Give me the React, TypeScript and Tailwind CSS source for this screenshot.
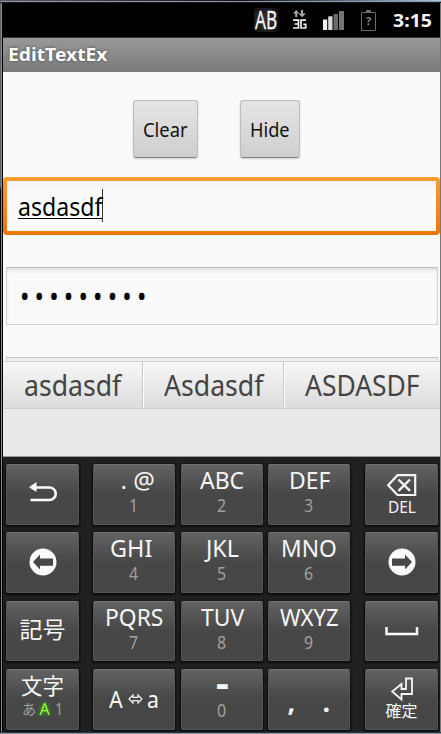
import { useLayoutEffect, useRef, useState, type ReactNode } from "react";

// A line of text condensed or widened to take up a given width.
function Fit({ w, className = "", children }: { w: number; className?: string; children: ReactNode }) {
  const ref = useRef<HTMLSpanElement>(null);
  const [scale, setScale] = useState(1);
  useLayoutEffect(() => {
    if (ref.current) setScale(w / ref.current.offsetWidth);
  }, [w]);
  return (
    <span className={`block shrink-0 whitespace-pre ${className}`} style={{ width: w }}>
      <span ref={ref} className="inline-block origin-left" style={{ transform: `scaleX(${scale})` }}>
        {children}
      </span>
    </span>
  );
}

function Key({ wide = false, className = "", children }: { wide?: boolean; className?: string; children: ReactNode }) {
  return (
    <div
      className={`flex h-[60.5px] flex-col items-center rounded-[2px] border border-[#565656] border-t-[#747474] bg-linear-to-b from-[#626262] via-[#474747] to-[#464646] text-[#f6f6f6] shadow-[0_1px_2px_1px_#0c0c0c] ${
        wide ? "w-[82px]" : "w-[73px]"
      } ${className}`}
    >
      {children}
    </div>
  );
}

function LetterKey({ label, w, digit, nudge = "" }: { label: string; w: number; digit: string; nudge?: string }) {
  return (
    <Key wide>
      <Fit w={w} className={`h-[32px] text-[24px] leading-[30px] ${nudge}`}>
        {label}
      </Fit>
      <Fit w={9.5} className="h-4 text-[18.5px] leading-4 text-[#a0a0a0]">
        {digit}
      </Fit>
    </Key>
  );
}

function Arrow({ flip = false }: { flip?: boolean }) {
  return (
    <svg width="28" height="28" viewBox="0 0 28 28" className={`-mt-px ${flip ? "-scale-x-100" : ""}`}>
      <circle cx="14" cy="14" r="13.5" fill="#fafafa" />
      <path d="M4 14 11 6.5V10.5H24V17.7H11V21.5Z" fill="#484848" />
    </svg>
  );
}

function StatusBar() {
  return (
    <header className="flex h-[34px] items-center bg-black pl-[251px] text-[#f4f4f4]">
      <div className="flex h-[24px] w-[24px] items-center justify-center rounded-[3px] bg-[radial-gradient(#333,#111)]">
        <Fit w={22} className="-mt-[2px] text-[25px] leading-[24px] [-webkit-text-stroke:0.3px_#f4f4f4]">
          AB
        </Fit>
      </div>
      <svg width="16" height="22" viewBox="0 0 16 22" className="ml-[14px]">
        <path d="M4.2 1 7.2 4.6H5.2V8H3.2V4.6H1Z M9 1H11V4.6H14L10 8.3 6.5 4.6H9Z" fill="#a8a8a8" />
        <path d="M1 11.2H6.5V19H1M2.5 15H6.5M14 11.2H9V19H13.7V15.4H11.3" fill="none" stroke="#eee" strokeWidth="1.7" />
      </svg>
      <svg width="24" height="22" viewBox="0 0 24 22" className="ml-[14px]">
        <path d="M1 10.5H5.2V21H1Z" fill="#f2f2f2" />
        <path d="M6.2 7.3H10.5V21H6.2Z" fill="#d8d8d8" />
        <path d="M11.5 5H16V21H11.5Z" fill="#696969" />
        <path d="M17 2H22V21H17Z" fill="#747474" />
      </svg>
      <div className="ml-[15px] flex w-[15px] flex-col items-center">
        <span className="h-[2px] w-[5px] bg-[#6c6c6c]" />
        <span className="flex h-[19px] w-[15px] items-center justify-center rounded-[1px] border-[1.5px] border-[#6c6c6c] text-[11px] font-bold text-[#858585]">
          ?
        </span>
      </div>
      <Fit w={39} className="ml-[17px] text-[18.5px] leading-[32px] font-bold">
        3:15
      </Fit>
    </header>
  );
}

function Keyboard() {
  return (
    <section className="grid h-[275px] grid-cols-[87px_88px_87px_97px_73px] content-start gap-y-[7.9px] bg-[#202020] pt-[7px] pl-[3px]">
      <Key className="justify-center">
        <svg width="30" height="22" viewBox="0 0 30 22" className="-mt-[5px]">
          <path d="M8 6.5H21.5A6 6 0 0 1 21.5 19H2.5" fill="none" stroke="#fafafa" strokeWidth="2.6" />
          <path d="M1 6.2 8.5 1V11Z" fill="#fafafa" />
        </svg>
      </Key>
      <LetterKey label=". @" w={34} digit="1" nudge="ml-[7px]" />
      <LetterKey label="ABC" w={44} digit="2" />
      <LetterKey label="DEF" w={41} digit="3" />
      <Key>
        <svg width="31" height="24" viewBox="0 0 31 24" className="mt-[8px]">
          <path d="M2.2 12.2 11.5 2.2H29.2V22H11.5Z" fill="none" stroke="#f6f6f6" strokeWidth="2.2" />
          <path d="M12.5 6.5 24 17.8M24 6.5 12.5 17.8" stroke="#f6f6f6" strokeWidth="2.4" />
        </svg>
        <Fit w={28} className="mt-[1px] text-[16.5px] leading-[18px]">
          DEL
        </Fit>
      </Key>

      <Key className="justify-center">
        <Arrow />
      </Key>
      <LetterKey label="GHI" w={42} digit="4" nudge="mr-[6px]" />
      <LetterKey label="JKL" w={33} digit="5" />
      <LetterKey label="MNO" w={56} digit="6" />
      <Key className="justify-center">
        <Arrow flip />
      </Key>

      <Key className="justify-center">
        <Fit w={46} className="mt-[-4px] text-[23px] leading-[30px]">
          記号
        </Fit>
      </Key>
      <LetterKey label="PQRS" w={58} digit="7" />
      <LetterKey label="TUV" w={43} digit="8" />
      <LetterKey label="WXYZ" w={59} digit="9" />
      <Key className="justify-center">
        <svg width="34" height="10" viewBox="0 0 34 10" className="-mt-px">
          <path d="M1.5 1V8H32V1" fill="none" stroke="#fafafa" strokeWidth="2.5" />
        </svg>
      </Key>

      <Key>
        <Fit w={43} className="mt-[2px] h-[29px] text-[22px] leading-[27px]">
          文字
        </Fit>
        <div className="flex w-[42px] items-center text-[15px] leading-[16px] text-[#a0a0a0]">
          <Fit w={14}>あ</Fit>
          <Fit w={10} className="ml-[4px] text-[16px] text-[#8eff3c] [text-shadow:0_0_5px_#2fd000]">
            A
          </Fit>
          <Fit w={8} className="ml-[5px] text-[16px]">
            1
          </Fit>
        </div>
      </Key>
      <Key wide>
        <div className="mt-[13px] flex items-center text-[23px] leading-[32px]">
          <Fit w={14}>A</Fit>
          <svg width="15" height="12" viewBox="0 0 15 12" className="mx-[4.5px]">
            <path d="M1 6 5 2V4.3H10V2L14 6 10 10V7.7H5V10Z" fill="none" stroke="#f2f2f2" strokeWidth="1.2" />
          </svg>
          <Fit w={12}>a</Fit>
        </div>
      </Key>
      <Key wide>
        <Fit w={13} className="h-[32px] text-[37px] leading-[26px] font-bold">
          -
        </Fit>
        <Fit w={9.5} className="h-4 text-[18.5px] leading-4 text-[#a0a0a0]">
          0
        </Fit>
      </Key>
      <Key wide>
        <div className="mt-[17px] flex w-[43px] justify-between text-[27px] leading-[30px] font-bold">
          <Fit w={8}>,</Fit>
          <Fit w={8}>.</Fit>
        </div>
      </Key>
      <Key>
        <svg width="24" height="25" viewBox="0 0 24 25" className="mt-[7px]">
          <path d="M16 1.5H22V17H11.5V22.5L2.2 14.5 11.5 7V12H16Z" fill="none" stroke="#f6f6f6" strokeWidth="1.8" />
        </svg>
        <Fit w={32} className="mt-px text-[16px] leading-[17px]">
          確定
        </Fit>
      </Key>
    </section>
  );
}

export default function App() {
  return (
    <div className="flex h-[734px] w-[441px] flex-col overflow-hidden bg-black font-['Noto_Sans','Noto_Sans_CJK_JP',sans-serif]">
      <div className="h-px shrink-0 bg-linear-to-r from-[#5a5f64] via-[#10131c] via-55% to-[#a8ccf0]" />
      <div className="h-px shrink-0 bg-[#8e979f]" />
      <div className="h-px shrink-0 bg-[#15181c]" />
      <div className="flex h-[729px] shrink-0">
        <div className="w-px bg-linear-to-b from-[#5d6468] from-25% to-black to-26%" />
        <div className="w-px bg-[#858b90]" />
        <div className="w-px bg-black" />
        <main className="flex w-[437px] shrink-0 flex-col bg-[#fafafa]">
          <StatusBar />
          <div className="flex h-[35px] items-center border-t border-[#333] bg-linear-to-b from-[#989898] to-[#7b7b7b] pl-[5px]">
            <Fit w={99} className="-mt-[2px] text-[18.5px] leading-[32px] font-bold text-white [text-shadow:0_0_3px_#444]">
              EditTextEx
            </Fit>
          </div>
          <section className="flex h-[289px] flex-col overflow-hidden">
            <div className="mt-[28px] flex shrink-0 gap-[42px] pl-[130px] text-[20px] text-[#111]">
              <button className="flex h-[58px] w-[65px] items-center justify-center rounded-[3px] border border-[#bdbdbd] border-b-[#888] bg-linear-to-b from-[#e5e5e5] to-[#cecece] shadow-[0_1px_2px_#ccc]">
                <Fit w={45} className="mt-px">
                  Clear
                </Fit>
              </button>
              <button className="flex h-[58px] w-[60px] items-center justify-center rounded-[3px] border border-[#bdbdbd] border-b-[#888] bg-linear-to-b from-[#e5e5e5] to-[#cecece] shadow-[0_1px_2px_#ccc]">
                <Fit w={40} className="mt-px">
                  Hide
                </Fit>
              </button>
            </div>
            <div className="mt-[19px] h-[58px] shrink-0 rounded-[4px] bg-linear-to-b from-[#fa9c30] to-[#ee7600] p-[4px]">
              <div className="flex h-full items-start bg-linear-to-b from-[#f1f1f1] via-[#fafafa] via-20% to-[#fafafa] pt-[8px] pl-[10.5px] text-black">
                <div className="flex h-[30px] border-b border-black">
                  <Fit w={84} className="text-[25px] leading-[35px]">
                    asdasdf
                  </Fit>
                </div>
                <span className="h-[33px] w-px bg-[#333]" />
              </div>
            </div>
            <div className="mt-[32px] ml-[3px] flex h-[58px] w-[432px] shrink-0 items-center border border-[#d2d2d2] border-t-[#bcbcbc] bg-[#fafafa] pl-[13px] shadow-[inset_0_4px_5px_-2px_#ddd]">
              <Fit w={131.5} className="text-[29px] leading-[34px] tracking-[6px] text-black">
                •••••••••
              </Fit>
            </div>
            <div className="mt-[32px] ml-[3px] h-[20px] w-[432px] shrink-0 border border-[#c8c8c8] bg-[#efefef]" />
          </section>
          <section className="flex h-[48px] border-t border-b border-[#d0d0d0] bg-linear-to-b from-[#f7f7f7] to-[#dcdcdc] text-[28.5px] leading-[47px] text-[#444]">
            <div className="flex w-[140px] justify-center border-r border-[#c8c8c8]">
              <Fit w={97}>asdasdf</Fit>
            </div>
            <div className="flex w-[141px] justify-center border-r border-l border-r-[#c8c8c8] border-l-white">
              <Fit w={99}>Asdasdf</Fit>
            </div>
            <div className="flex flex-1 justify-center border-l border-white">
              <Fit w={115}>ASDASDF</Fit>
            </div>
          </section>
          <div className="h-[48px] border-b border-[#999] bg-[#ebe8ec]" />
          <Keyboard />
        </main>
        <div className="w-px bg-[#777]" />
      </div>
      <div className="h-px shrink-0 bg-[#30383e]" />
      <div className="h-px shrink-0 bg-[#84939e]" />
    </div>
  );
}
